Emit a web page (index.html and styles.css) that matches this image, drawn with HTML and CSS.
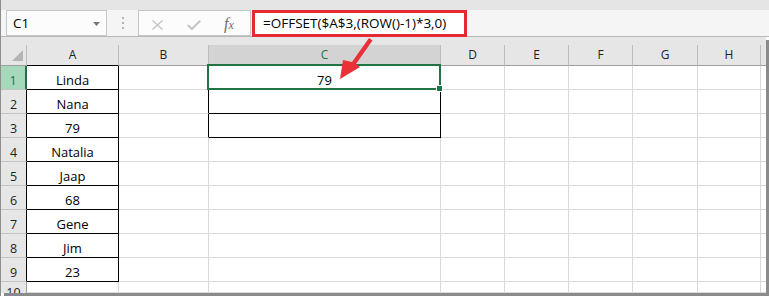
FILE: index.html
```html
<!DOCTYPE html>
<html>
<head>
<meta charset="utf-8">
<link rel="stylesheet" href="styles.css">
</head>
<body>
<div class="app">
  <div class="strip"></div>
  <div class="fbar">
    <div class="namebox"><span>C1</span><svg class="dd" width="7" height="4" viewBox="0 0 7 4"><polygon points="0,0 7,0 3.5,4" fill="#777"/></svg></div>
    <div class="grip"><i></i><i></i><i></i></div>
    <div class="fxbox">
      <svg class="xic" width="11" height="10" viewBox="0 0 11 10"><path d="M0.5 0.5 L10.5 9.5 M10.5 0.5 L0.5 9.5" stroke="#c4c4c4" stroke-width="1.4" fill="none"/></svg>
      <svg class="ck" width="14" height="10" viewBox="0 0 14 10"><path d="M0.8 5 L4.8 9 L13.2 0.8" stroke="#c4c4c4" stroke-width="2" fill="none"/></svg>
      <span class="fx">f<span>x</span></span>
    </div>
    <div class="formula">=OFFSET($A$3,(ROW()-1)*3,0)</div>
  </div>
  <div class="sheet">
    <div class="grid">
      <div class="c corner"><svg width="11" height="11" viewBox="0 0 11 11"><polygon points="11,0 11,11 0,11" fill="#b5b5b5"/></svg></div>
      <div class="c ch cha">A</div>
      <div class="c ch">B</div>
      <div class="c ch chc">C</div>
      <div class="c ch">D</div>
      <div class="c ch">E</div>
      <div class="c ch">F</div>
      <div class="c ch">G</div>
      <div class="c ch">H</div>
      <div class="c ch chx"></div>

      <div class="c rh rsel">1</div>
      <div class="c a">Linda</div>
      <div class="c bk"></div>
      <div class="c cc c1"><span class="val">79</span><div class="sel"><div class="handle"></div></div></div>
      <div class="c"></div><div class="c"></div><div class="c"></div><div class="c"></div><div class="c"></div><div class="c x"></div>

      <div class="c rh rb">2</div>
      <div class="c a">Nana</div>
      <div class="c bk"></div>
      <div class="c cc"></div>
      <div class="c"></div><div class="c"></div><div class="c"></div><div class="c"></div><div class="c"></div><div class="c x"></div>

      <div class="c rh rb">3</div>
      <div class="c a">79</div>
      <div class="c bk"></div>
      <div class="c cc"></div>
      <div class="c"></div><div class="c"></div><div class="c"></div><div class="c"></div><div class="c"></div><div class="c x"></div>

      <div class="c rh rb">4</div>
      <div class="c a">Natalia</div>
      <div class="c"></div>
      <div class="c"></div>
      <div class="c"></div><div class="c"></div><div class="c"></div><div class="c"></div><div class="c"></div><div class="c x"></div>

      <div class="c rh rb">5</div>
      <div class="c a">Jaap</div>
      <div class="c"></div>
      <div class="c"></div>
      <div class="c"></div><div class="c"></div><div class="c"></div><div class="c"></div><div class="c"></div><div class="c x"></div>

      <div class="c rh rb">6</div>
      <div class="c a">68</div>
      <div class="c"></div>
      <div class="c"></div>
      <div class="c"></div><div class="c"></div><div class="c"></div><div class="c"></div><div class="c"></div><div class="c x"></div>

      <div class="c rh rb">7</div>
      <div class="c a">Gene</div>
      <div class="c"></div>
      <div class="c"></div>
      <div class="c"></div><div class="c"></div><div class="c"></div><div class="c"></div><div class="c"></div><div class="c x"></div>

      <div class="c rh rb">8</div>
      <div class="c a">Jim</div>
      <div class="c"></div>
      <div class="c"></div>
      <div class="c"></div><div class="c"></div><div class="c"></div><div class="c"></div><div class="c"></div><div class="c x"></div>

      <div class="c rh rb">9</div>
      <div class="c a">23</div>
      <div class="c"></div>
      <div class="c"></div>
      <div class="c"></div><div class="c"></div><div class="c"></div><div class="c"></div><div class="c"></div><div class="c x"></div>

      <div class="c rh r10">10</div>
      <div class="c"></div>
      <div class="c"></div>
      <div class="c"></div>
      <div class="c"></div><div class="c"></div><div class="c"></div><div class="c"></div><div class="c"></div><div class="c x"></div>
    </div>
  </div>
  <svg class="arrow" width="769" height="296" viewBox="0 0 769 296"><path d="M369 38 L372.5 40.5 L356 64 L360 67 L340 79 L343 60 L352 62 Z" fill="#ea3138"/></svg>
</div>
</body>
</html>
```
FILE: styles.css
```css
* { box-sizing: border-box; }
html, body { margin: 0; padding: 0; }
body {
  width: 769px;
  height: 296px;
  overflow: hidden;
  background: #fff;
  font-family: "Open Sans", "Noto Sans", sans-serif;
  color: #000;
}
.app {
  position: relative;
  width: 769px;
  height: 296px;
  border-left: 1px solid #8e8e8e;
}
.strip {
  height: 10px;
  background: #e5e5e5;
}
.fbar {
  height: 27px;
  background: #f5f5f5;
  border-bottom: 1px solid #b8b8b8;
  display: flex;
  align-items: flex-start;
  padding-left: 5px;
}
.namebox {
  width: 101px;
  height: 26px;
  border: 1px solid #c6c6c6;
  background: #fcfcfc;
  display: flex;
  align-items: center;
  justify-content: space-between;
  padding: 0 6px 0 6px;
  font-size: 13.5px;
}
.namebox .dd { margin-top: 1px; }
.grip {
  width: 31px;
  display: flex;
  flex-direction: column;
  align-items: center;
  gap: 3px;
  padding-top: 7px;
}
.grip i {
  display: block;
  width: 2px;
  height: 2px;
  background: #b3b3b3;
}
.fxbox {
  width: 113px;
  height: 26px;
  border: 1px solid #c6c6c6;
  background: #fcfcfc;
  display: flex;
  align-items: flex-start;
  padding-left: 13px;
}
.xic { margin-top: 9px; }
.ck { margin-top: 9px; margin-left: 24px; }
.fx {
  margin-left: 23px;
  margin-top: 3px;
  font-family: "Liberation Serif", serif;
  font-style: italic;
  font-size: 16px;
  line-height: 20px;
  color: #6b6b6b;
}
.fx span { font-size: 12px; }
.formula {
  width: 215px;
  height: 27px;
  margin-left: 1px;
  border: 3px solid #e52b31;
  background: #fff;
  padding-left: 8px;
  font-size: 13.5px;
  line-height: 21px;
  white-space: nowrap;
}
.sheet {
  width: 765px;
  height: 256px;
  background: #e6e6e6;
  padding-top: 8px;
  box-shadow: 3px 3px 0 #8b8b8b;
  overflow: hidden;
}
.grid {
  display: grid;
  grid-template-columns: 26px 92px 90px 232px 64px 64px 64px 65px 63px 5px;
  grid-template-rows: 21px repeat(9, 24px) 11px;
  background: #fff;
}
.c {
  border-right: 1px solid #d9d9d9;
  border-bottom: 1px solid #d9d9d9;
  font-size: 13px;
  text-align: center;
  line-height: 22px;
  padding-top: 3px;
  white-space: nowrap;
  overflow: visible;
}
.c.x { border-right: none; }
.corner {
  background: #e6e6e6;
  border-right-color: #bdbdbd;
  border-bottom-color: #9e9e9e;
  display: flex;
  justify-content: flex-end;
  align-items: flex-end;
  padding: 0 3px 4px 0;
}
.corner svg { display: block; }
.ch {
  background: #e6e6e6;
  border-right-color: #bcbcbc;
  border-bottom-color: #9e9e9e;
  font-size: 12px;
  line-height: 20px;
  padding-top: 0;
  color: #1e1e1e;
}
.ch.chx { border-right: none; }
.cha { border-bottom-color: #000; }
.chc {
  background: #d3d3d3;
  color: #217346;
}
.rh {
  background: #e6e6e6;
  border-right-color: #9e9e9e;
  border-bottom-color: #c4c4c4;
  font-size: 12.5px;
  padding-top: 4px;
  color: #1e1e1e;
}
.rh.rb { border-right-color: #000; }
.rh.rsel {
  background: #a6d8bb;
  color: #217346;
  border-right: 2px solid #217346;
}
.rh.r10 {
  padding-top: 0;
  overflow: hidden;
  border-bottom: none;
}
.a {
  border-right-color: #000;
  border-bottom-color: #000;
}
.bk { border-right-color: #000; }
.cc {
  border-right-color: #000;
  border-bottom-color: #000;
}
.c1 { position: relative; }
.sel {
  position: absolute;
  left: -2px;
  top: -2px;
  right: -1px;
  bottom: -1px;
  border: 2px solid #217346;
  z-index: 2;
}
.handle {
  position: absolute;
  right: -4px;
  bottom: -4px;
  width: 7px;
  height: 7px;
  background: #217346;
  border: 1px solid #fff;
}
.arrow {
  position: absolute;
  left: -1px;
  top: 0;
  pointer-events: none;
  z-index: 5;
}
```
